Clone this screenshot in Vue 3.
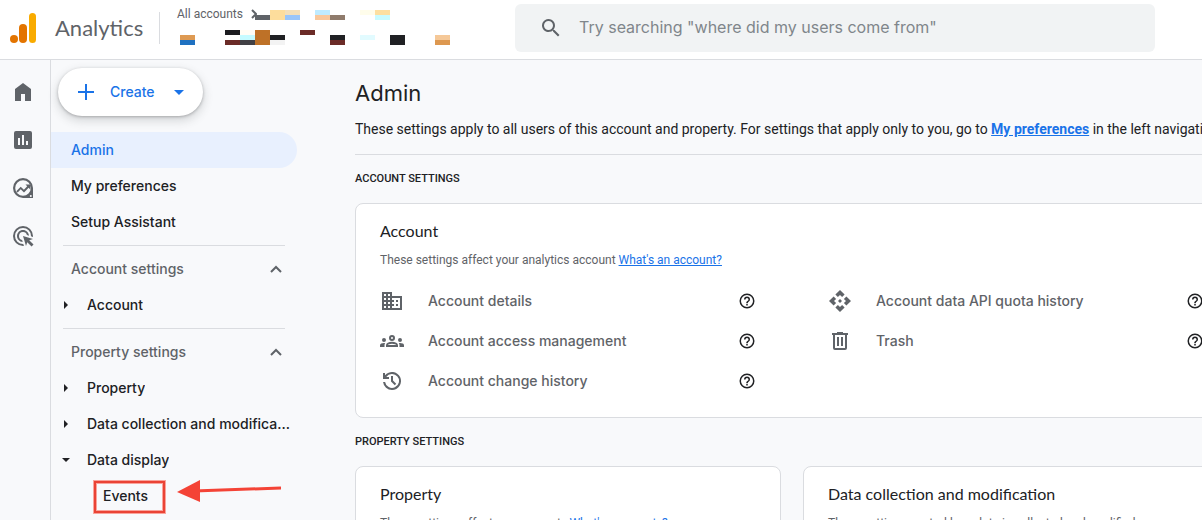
<script setup>
import { ref } from 'vue'

const query = ref('')

const railItems = [
  { name: 'Home', d: 'M4 21V9l8-6 8 6v12h-6v-7h-4v7z' },
  { name: 'Reports', d: 'M19 3H5a2 2 0 0 0-2 2v14a2 2 0 0 0 2 2h14a2 2 0 0 0 2-2V5a2 2 0 0 0-2-2zM9 17H7v-7h2v7zm4 0h-2V7h2v10zm4 0h-2v-4h2v4z' },
  { name: 'Explore', d: 'M12 2a10 10 0 1 0 0 20h10V12A10 10 0 0 0 12 2zm0 2.200a7.800 7.800 0 1 1 0 15.600 7.800 7.800 0 0 1 0-15.600zM19.800 19a1 1 0 1 1 0 2 1 1 0 0 1 0-2zM5.300 15.200l4.400-4.500 3.200 3.100 3.300-3.500-1.700-1.700h4.800v4.800l-1.700-1.700-4.600 4.800-3.300-3.200-3 3.100z' },
  { name: 'Advertising', d: 'M11.700 18C8.500 17.800 6 15.200 6 12c0-3.300 2.700-6 6-6 3.200 0 5.800 2.500 6 5.700l-2.100-.6A4 4 0 1 0 11.100 15.900l.6 2.100zM22 12c0 .3 0 .6-.04.9l-1.970-.590L20 12a8 8 0 1 0-8 8l.3-.01.6 1.970-.9.040a10 10 0 1 1 10-10zm-3.770 4.260L22 15l-10-3 3 10 1.260-3.770 4.270 4.270 1.980-1.980-4.280-4.260z' },
]

const topLinks = [
  { label: 'Admin', active: true },
  { label: 'My preferences', active: false },
  { label: 'Setup Assistant', active: false },
]

const groups = [
  { title: 'Account settings', items: [{ label: 'Account', open: false, children: [] }] },
  {
    title: 'Property settings',
    items: [
      { label: 'Property', open: false, children: [] },
      { label: 'Data collection and modification', open: false, children: [] },
      { label: 'Data display', open: true, children: ['Events'] },
    ],
  },
]

const icons = {
  building: 'M12 7V3H2v18h20V7H12zM6 19H4v-2h2v2zm0-4H4v-2h2v2zm0-4H4V9h2v2zm0-4H4V5h2v2zm4 12H8v-2h2v2zm0-4H8v-2h2v2zm0-4H8V9h2v2zm0-4H8V5h2v2zm10 12h-8v-2h2v-2h-2v-2h2v-2h-2V9h8v10zm-2-8h-2v2h2v-2zm0 4h-2v2h2v-2z',
  group: 'M4 13a2 2 0 1 0 0-4 2 2 0 0 0 0 4zm1.130 1.100A7 7 0 0 0 4 14c-.990 0-1.930.210-2.780.580A2.010 2.010 0 0 0 0 16.430V18h4.500v-1.610c0-.830.230-1.610.630-2.290zM20 13a2 2 0 1 0 0-4 2 2 0 0 0 0 4zm4 3.430c0-.810-.480-1.530-1.220-1.850A6.950 6.950 0 0 0 20 14c-.390 0-.760.040-1.130.1.4.680.630 1.460.630 2.290V18H24v-1.570zm-7.760-2.780A10.500 10.500 0 0 0 12 12.750c-1.630 0-3.070.390-4.240.9A2.990 2.990 0 0 0 6 16.390V18h12v-1.610c0-1.180-.680-2.260-1.760-2.740zM8.070 16c.09-.230.130-.390.910-.690a8.300 8.300 0 0 1 6.040 0c.770.3.810.460.910.690H8.070zM12 8a1 1 0 1 1 0 2 1 1 0 0 1 0-2m0-2a3 3 0 1 0 0 6 3 3 0 0 0 0-6z',
  history: 'M12 21a9 9 0 0 1-8.950-8H5.100A7 7 0 1 0 6.250 8H9v2H3V4h2v2.350A9 9 0 1 1 12 21zm2.800-4.800L11 12.400V7h2v4.600l3.200 3.200-1.400 1.400z',
  api: 'M14 12l-2 2-2-2 2-2 2 2zm-2-6l2.120 2.120 2.500-2.500L12 1 7.380 5.620l2.500 2.500L12 6zm-6 6l2.120-2.120-2.500-2.500L1 12l4.620 4.620 2.500-2.500L6 12zm12 0l-2.120 2.120 2.500 2.500L23 12l-4.620-4.620-2.500 2.500L18 12zm-6 6l-2.120-2.120-2.500 2.500L12 23l4.620-4.620-2.500-2.500L12 18z',
  trash: 'M15 4V3H9v1H4v2h1v13a2 2 0 0 0 2 2h10a2 2 0 0 0 2-2V6h1V4h-5zm2 15H7V6h10v13zM9 8h2v9H9V8zm4 0h2v9h-2V8z',
}

const accountLinks = [
  { label: 'Account details', icon: 'building' },
  { label: 'Account data API quota history', icon: 'api' },
  { label: 'Account access management', icon: 'group' },
  { label: 'Trash', icon: 'trash' },
  { label: 'Account change history', icon: 'history' },
]

// Redacted account names: x, y, width, height, colour
const blocks = [
  [75, 5, 15, 5, '#5f6368'], [90, 0, 15, 10, '#fddd9c'], [105, 0, 15, 5, '#f3dfba'], [105, 5, 15, 5, '#99c5fa'],
  [135, 0, 15, 5, '#bfebff'], [135, 5, 15, 5, '#f9c89c'], [150, 5, 15, 5, '#8f7b6c'],
  [180, 0, 15, 5, '#fffdeb'], [195, 0, 15, 5, '#fddfa0'], [195, 5, 15, 5, '#c9fbff'],
  [0, 25, 15, 5, '#de9a53'], [0, 30, 15, 5, '#1f71c1'],
  [45, 20, 15, 5, '#1c1c20'], [45, 30, 15, 5, '#6b2b27'],
  [60, 20, 15, 5, '#fffdf5'], [60, 25, 15, 5, '#c5fbff'], [60, 30, 15, 5, '#414045'],
  [75, 20, 15, 15, '#be7127'], [90, 25, 15, 5, '#202124'], [90, 30, 15, 5, '#f3f3f3'],
  [120, 20, 15, 5, '#6b2b27'], [150, 25, 15, 5, '#202124'], [150, 30, 15, 5, '#6b2b27'],
  [180, 25, 15, 5, '#e2fbff'], [210, 25, 15, 10, '#202124'],
  [255, 25, 15, 5, '#f5c898'], [255, 30, 15, 5, '#dd9850'],
]
</script>

<template>
  <div class="app">
    <header class="topbar">
      <a class="brand" href="#">
        <svg class="logo" viewBox="0 0 28 32" aria-hidden="true">
          <rect x="19" y="1" width="7" height="30" rx="3.500" fill="#f9ab00" />
          <rect x="9" y="12" width="8" height="19" rx="4" fill="#e37400" />
          <circle cx="4" cy="27" r="4" fill="#e37400" />
        </svg>
        <span class="brand-name">Analytics</span>
      </a>
      <div class="accounts">
        <button class="crumb" type="button">
          <span>All accounts</span>
          <svg class="crumb-arrow" viewBox="0 0 6 10" aria-hidden="true"><path d="M1 1l4 4-4 4" /></svg>
        </button>
        <svg class="redacted" viewBox="0 0 270 35" aria-hidden="true" shape-rendering="crispEdges">
          <rect v-for="(b, i) in blocks" :key="i" :x="b[0]" :y="b[1]" :width="b[2]" :height="b[3]" :fill="b[4]" />
        </svg>
      </div>
      <form class="search" role="search" @submit.prevent>
        <svg class="icon" viewBox="0 0 24 24" aria-hidden="true">
          <path d="M15.500 14h-.790l-.280-.270A6.500 6.500 0 1 0 13.730 14.430l.270.280v.790l5 5L20.490 19l-4.990-5zm-6 0a4.500 4.500 0 1 1 0-9 4.500 4.500 0 0 1 0 9z" />
        </svg>
        <input v-model="query" type="search" aria-label="Search" placeholder='Try searching "where did my users come from"' />
      </form>
    </header>

    <div class="body">
      <nav class="rail" aria-label="Main">
        <a v-for="r in railItems" :key="r.name" href="#" :aria-label="r.name">
          <svg class="icon" viewBox="0 0 24 24" aria-hidden="true"><path :d="r.d" fill-rule="evenodd" /></svg>
        </a>
      </nav>

      <nav class="sidebar" aria-label="Admin sections">
        <button class="create" type="button">
          <svg class="icon" viewBox="0 0 24 24" aria-hidden="true"><path d="M11 4h2v7h7v2h-7v7h-2v-7H4v-2h7z" /></svg>
          <span>Create</span>
          <svg class="icon" viewBox="0 0 24 24" aria-hidden="true"><path d="M7 10l5 5 5-5z" /></svg>
        </button>

        <ul>
          <li v-for="l in topLinks" :key="l.label">
            <a class="top-link" :class="{ active: l.active }" href="#">{{ l.label }}</a>
          </li>
        </ul>

        <section v-for="g in groups" :key="g.title" class="group">
          <button class="group-title" type="button" aria-expanded="true">
            <span>{{ g.title }}</span>
            <svg class="chevron" viewBox="0 0 18 18" aria-hidden="true"><path d="M4 12l5-5 5 5" /></svg>
          </button>
          <ul>
            <li v-for="item in g.items" :key="item.label">
              <button class="node" type="button" :aria-expanded="item.open">
                <svg class="caret" viewBox="0 0 8 8" aria-hidden="true">
                  <path :d="item.open ? 'M0 2h8L4 6z' : 'M2 0v8l4-4z'" />
                </svg>
                <span>{{ item.label }}</span>
              </button>
              <ul v-if="item.children.length">
                <li v-for="c in item.children" :key="c" class="child">
                  <a href="#">{{ c }}</a>
                  <svg class="callout" viewBox="0 0 196 36" aria-hidden="true">
                    <rect x="5" y="4" width="69" height="30" fill="none" stroke="#f9a49c" stroke-width="4" />
                    <rect x="5" y="4" width="69" height="30" fill="none" stroke="#ea4335" stroke-width="2" />
                    <path d="M104 13l87-3" stroke="#f44336" stroke-width="3" />
                    <path d="M87 14l23-12v22z" fill="#f44336" />
                  </svg>
                </li>
              </ul>
            </li>
          </ul>
        </section>
      </nav>

      <main class="main">
        <div class="content">
          <div class="intro">
            <h1>Admin</h1>
            <p>
              These settings apply to all users of this account and property. For settings that apply only to you, go to
              <a href="#">My preferences</a> in the left navigation.
            </p>
          </div>

          <h2>ACCOUNT SETTINGS</h2>
          <section class="card">
            <h3>Account</h3>
            <p>These settings affect your analytics account <a href="#">What's an account?</a></p>
            <ul class="links">
              <li v-for="l in accountLinks" :key="l.label">
                <svg class="icon" viewBox="0 0 24 24" aria-hidden="true"><path :d="icons[l.icon]" fill-rule="evenodd" /></svg>
                <a href="#">{{ l.label }}</a>
                <button class="help" type="button" :aria-label="'Help: ' + l.label">
                  <svg viewBox="0 0 24 24" aria-hidden="true">
                    <path d="M11 18h2v-2h-2v2zm1-16a10 10 0 1 0 0 20 10 10 0 0 0 0-20zm0 18a8 8 0 1 1 0-16 8 8 0 0 1 0 16zm0-14a4 4 0 0 0-4 4h2a2 2 0 1 1 4 0c0 2-3 1.750-3 5h2c0-2.250 3-2.500 3-5a4 4 0 0 0-4-4z" />
                  </svg>
                </button>
              </li>
            </ul>
          </section>

          <h2>PROPERTY SETTINGS</h2>
          <div class="cards">
            <section class="card">
              <h3>Property</h3>
              <p>These settings affect your property <a href="#">What's a property?</a></p>
            </section>
            <section class="card">
              <h3>Data collection and modification</h3>
              <p>These settings control how data is collected and modified</p>
            </section>
          </div>
        </div>
      </main>
    </div>
  </div>
</template>

<style>
body {
  background: #f8f9fb;
}
</style>

<style scoped>
.app {
  --display: Inter, 'Open Sans', sans-serif;
  --title: Lato, 'Open Sans', sans-serif;
  --grey: #5f6368;
  --ink: #202124;
  --blue: #1a73e8;
  --line: #dadce0;
  display: flex;
  flex-direction: column;
  height: 100vh;
  overflow: hidden;
  background: #f8f9fb;
  color: var(--ink);
  font-family: Roboto, sans-serif;
  font-size: 14px;
}
* {
  box-sizing: border-box;
}
ul {
  list-style: none;
  margin: 0;
  padding: 0;
}
h1, h2, h3, p {
  margin: 0;
}
button {
  border: 0;
  padding: 0;
  background: none;
  color: inherit;
  font: inherit;
  text-align: left;
}
svg {
  display: block;
  flex: none;
}
.icon {
  width: 24px;
  height: 24px;
  fill: var(--grey);
}

.topbar {
  display: flex;
  flex: none;
  height: 60px;
  background: #fff;
  border-bottom: 1px solid var(--line);
}
.brand {
  display: flex;
  align-items: center;
  gap: 17px;
  width: 160px;
  margin: 12px 0 15px;
  padding-left: 10px;
  border-right: 1px solid var(--line);
  color: var(--grey);
  text-decoration: none;
}
.logo {
  width: 28px;
  height: 32px;
}
.brand-name {
  font: 400 22px/32px var(--title);
}
.accounts {
  position: relative;
  width: 355px;
  padding: 6px 0 0 17px;
}
.crumb {
  display: flex;
  align-items: center;
  gap: 8px;
  color: var(--grey);
  font-size: 12px;
  line-height: 16px;
}
.crumb-arrow {
  width: 6px;
  height: 10px;
  fill: none;
  stroke: var(--grey);
  stroke-width: 2;
}
.redacted {
  position: absolute;
  left: 20px;
  top: 10px;
  width: 270px;
  height: 35px;
}
.search {
  display: flex;
  flex: 1;
  align-items: center;
  gap: 16px;
  height: 48px;
  margin: 4px 47px 0 0;
  padding: 0 24px;
  border-radius: 6px;
  background: #f1f3f4;
}
.search input {
  flex: 1;
  min-width: 0;
  padding: 0 0 2px;
  border: 0;
  outline: 0;
  background: none;
  color: var(--ink);
  font: 400 16px/24px var(--display);
}
.search input::placeholder {
  color: #80868b;
  opacity: 1;
}

.body {
  display: flex;
  flex: 1;
  min-height: 0;
}
.rail {
  display: flex;
  flex: none;
  flex-direction: column;
  align-items: center;
  gap: 24px;
  width: 51px;
  padding: 20px 4px 0 0;
  border-right: 1px solid var(--line);
}
.sidebar {
  flex: none;
  width: 247px;
  font: 500 14px/20px var(--display);
}
.create {
  display: flex;
  align-items: center;
  gap: 12px;
  height: 48px;
  margin: 8px 0 16px 7px;
  padding: 0 12px 0 16px;
  border-radius: 24px;
  background: #fff;
  box-shadow: 0 1px 3px rgba(60, 64, 67, 0.35), 0 4px 8px 2px rgba(60, 64, 67, 0.15);
  color: var(--blue);
}
.create .icon {
  fill: var(--blue);
}
.top-link {
  display: block;
  margin-right: 1px;
  padding: 8px 20px;
  border-radius: 0 18px 18px 0;
  color: var(--ink);
  text-decoration: none;
}
.top-link.active {
  background: #e8f0fe;
  color: var(--blue);
}
.group {
  margin-top: 5px;
  padding-top: 6px;
  background: linear-gradient(var(--line), var(--line)) 12px 0 / 222px 1px no-repeat;
}
.group-title {
  display: flex;
  align-items: center;
  justify-content: space-between;
  width: 100%;
  height: 36px;
  padding: 0 13px 0 20px;
  color: var(--grey);
}
.chevron {
  width: 18px;
  height: 18px;
  fill: none;
  stroke: var(--grey);
  stroke-width: 2;
}
.node {
  display: flex;
  align-items: center;
  gap: 17px;
  width: 242px;
  height: 36px;
  padding-left: 11px;
}
.node span {
  overflow: hidden;
  text-overflow: ellipsis;
  white-space: nowrap;
}
.caret {
  width: 8px;
  height: 8px;
  fill: var(--ink);
}
.child {
  position: relative;
}
.child a {
  display: block;
  padding: 8px 0 8px 52px;
  color: var(--ink);
  text-decoration: none;
}
.callout {
  position: absolute;
  left: 39px;
  top: 0;
  width: 196px;
  height: 36px;
}

.main {
  flex: 1;
  min-width: 0;
  overflow: hidden;
  padding: 19px 0 0 57px;
}
.content {
  min-width: 874px;
}
.intro {
  padding-bottom: 15px;
  border-bottom: 1px solid var(--line);
}
h1 {
  margin-bottom: 12px;
  font: 400 22px/28px var(--display);
}
.intro p {
  line-height: 20px;
}
a {
  color: var(--blue);
}
.intro a {
  font-weight: 700;
}
h2 {
  margin: 15px 0;
  padding: 1px 0;
  font-size: 11px;
  font-weight: 500;
  line-height: 16px;
}
.card {
  padding: 15px 24px;
  border: 1px solid var(--line);
  border-radius: 8px;
  background: #fff;
}
.card h3 {
  font: 400 16px/24px var(--title);
}
.card p {
  margin-top: 9px;
  color: var(--grey);
  font-size: 12px;
  line-height: 16px;
}
.links {
  display: grid;
  grid-template-columns: 1fr 1fr;
  gap: 16px 72px;
  padding: 21px 0 9px;
}
.links li {
  display: flex;
  align-items: center;
  height: 24px;
}
.links a {
  flex: 1;
  margin-left: 24px;
  color: var(--grey);
  font: 500 14px/20px var(--display);
  text-decoration: none;
}
.help svg {
  width: 18px;
  height: 18px;
  fill: var(--ink);
}
.cards {
  display: grid;
  grid-template-columns: 1fr 1fr;
  gap: 22px;
}
</style>
